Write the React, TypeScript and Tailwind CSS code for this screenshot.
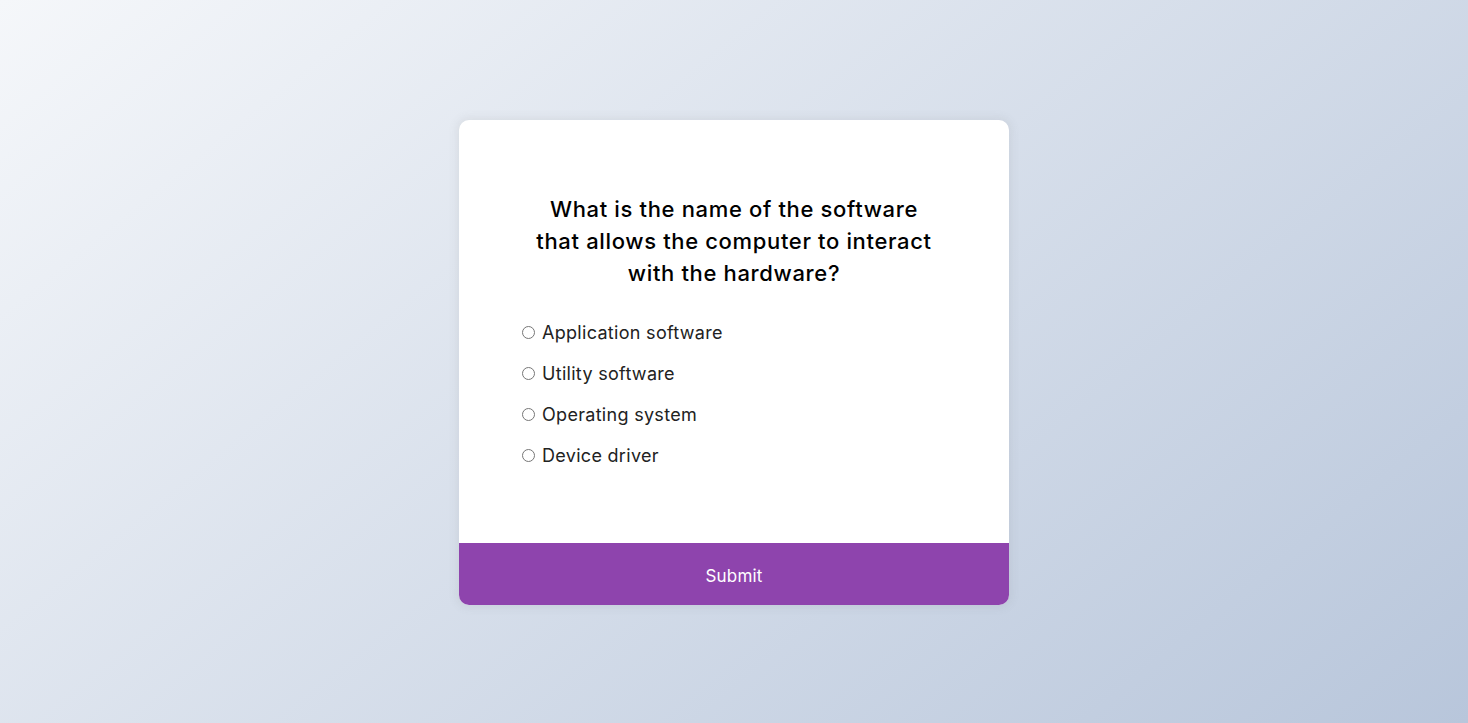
const options = [
  { id: 'a', label: 'Application software' },
  { id: 'b', label: 'Utility software' },
  { id: 'c', label: 'Operating system' },
  { id: 'd', label: 'Device driver' },
];

export default function App() {
  return (
    <div
      className="min-h-screen w-full flex items-center justify-center bg-[linear-gradient(321deg,#b8c6db_0%,#f5f7fa_100%)]"
      style={{ fontFamily: 'Inter, "Open Sans", sans-serif' }}
    >
      <div className="mt-[2px] w-[550px] bg-white rounded-[10px] overflow-hidden shadow-[0_0_10px_2px_rgba(100,100,100,0.1)]">
        <div className="px-16 pt-[73px] pb-[74px]">
          <h2 className="text-center text-[22px] leading-[32px] font-medium text-black tracking-[0.65px]">
            What is the name of the software
            <br />
            that allows the computer to interact
            <br />
            with the hardware?
          </h2>
          <ul className="mt-[30px] flex flex-col gap-[14px]">
            {options.map((o) => (
              <li key={o.id} className="h-[27px] flex items-center text-[18px] text-[#222] tracking-[0.3px]">
                <input
                  type="radio"
                  name="answer"
                  id={o.id}
                  className="w-[13px] h-[13px] -ml-[1px] mr-[7px] cursor-pointer"
                />
                <label htmlFor={o.id} className="cursor-pointer">
                  {o.label}
                </label>
              </li>
            ))}
          </ul>
        </div>
        <button className="block w-full h-[62px] pt-[5px] bg-[#8e44ad] text-white text-[17px] tracking-[0.2px] cursor-pointer">
          Submit
        </button>
      </div>
    </div>
  );
}
